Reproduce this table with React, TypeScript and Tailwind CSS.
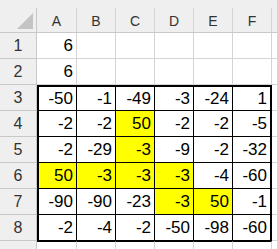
const cols = ['A', 'B', 'C', 'D', 'E', 'F']

const colW = ['w-[40px]', 'w-[39px]', 'w-[39px]', 'w-[39px]', 'w-[39px]', 'w-[39px]']

// rows 3..8 hold the boxed block
const block: number[][] = [
    [-50, -1, -49, -3, -24, 1],
    [-2, -2, 50, -2, -2, -5],
    [-2, -29, -3, -9, -2, -32],
    [50, -3, -3, -3, -4, -60],
    [-90, -90, -23, -3, 50, -1],
    [-2, -4, -2, -50, -98, -60]
]

const yellow = new Set(['C4', 'C5', 'A6', 'B6', 'C6', 'D6', 'D7', 'E7'])

function RowHeader({ n }: { n?: number }) {
    return (
        <div className="w-[37px] h-[26px] shrink-0 flex items-center justify-center bg-[#efefef] border-r border-b border-[#c8c8c8] text-[16px] text-[#333] pt-[1px]">
            {n}
        </div>
    )
}

function Cell({ row, col, value }: { row: number; col: number; value?: number }) {
    const inBlock = row >= 3 && row <= 8
    const id = cols[col] + row
    const cls = [
        'h-[26px] shrink-0 flex items-center justify-end pr-[3px] pt-[1px] border-r border-b',
        colW[col],
        inBlock ? 'border-black' : 'border-[#d4d4d4]',
        row === 3 ? 'border-t-2' : '',
        inBlock && col === 0 ? 'border-l-2' : '',
        inBlock && col === 5 ? 'border-r-2' : '',
        row === 9 ? 'border-t border-t-black' : '',
        yellow.has(id) ? 'bg-[#ffff00]' : 'bg-white'
    ].join(' ')
    return <div className={cls}>{value}</div>
}

export default function App() {
    const rows: { n: number; values: (number | undefined)[] }[] = [
        { n: 1, values: [6] },
        { n: 2, values: [6] },
        ...block.map((values, i) => ({ n: i + 3, values })),
        { n: 9, values: [] }
    ]

    return (
        <div
            className="w-[277px] h-[249px] overflow-hidden bg-white text-black text-[17px]"
            style={{ fontFamily: '"Liberation Sans", Arial, sans-serif' }}
        >
            <div className="h-[8px] bg-[#efefef]" />
            <div className="flex h-[25px] bg-[#efefef] border-b border-[#c8c8c8]">
                <div className="w-[37px] shrink-0 border-r border-[#c8c8c8] flex items-end justify-end pr-[3px] pb-[3px]">
                    <svg width="16" height="16" viewBox="0 0 16 16">
                        <polygon points="16,0 16,16 0,16" fill="#c4c4c4" />
                    </svg>
                </div>
                {cols.map((c, i) => (
                    <div
                        key={c}
                        className={`${colW[i]} shrink-0 border-r border-[#d4d4d4] flex items-center justify-center text-[14px] text-[#333] pt-[2px]`}
                    >
                        {c}
                    </div>
                ))}
                <div className="flex-1" />
            </div>
            {rows.map((r) => (
                <div key={r.n} className="flex">
                    <RowHeader n={r.n < 9 ? r.n : undefined} />
                    {cols.map((c, i) => (
                        <Cell key={c} row={r.n} col={i} value={r.values[i]} />
                    ))}
                    <div className="flex-1 h-[26px] border-b border-[#d4d4d4] bg-white" />
                </div>
            ))}
        </div>
    )
}
